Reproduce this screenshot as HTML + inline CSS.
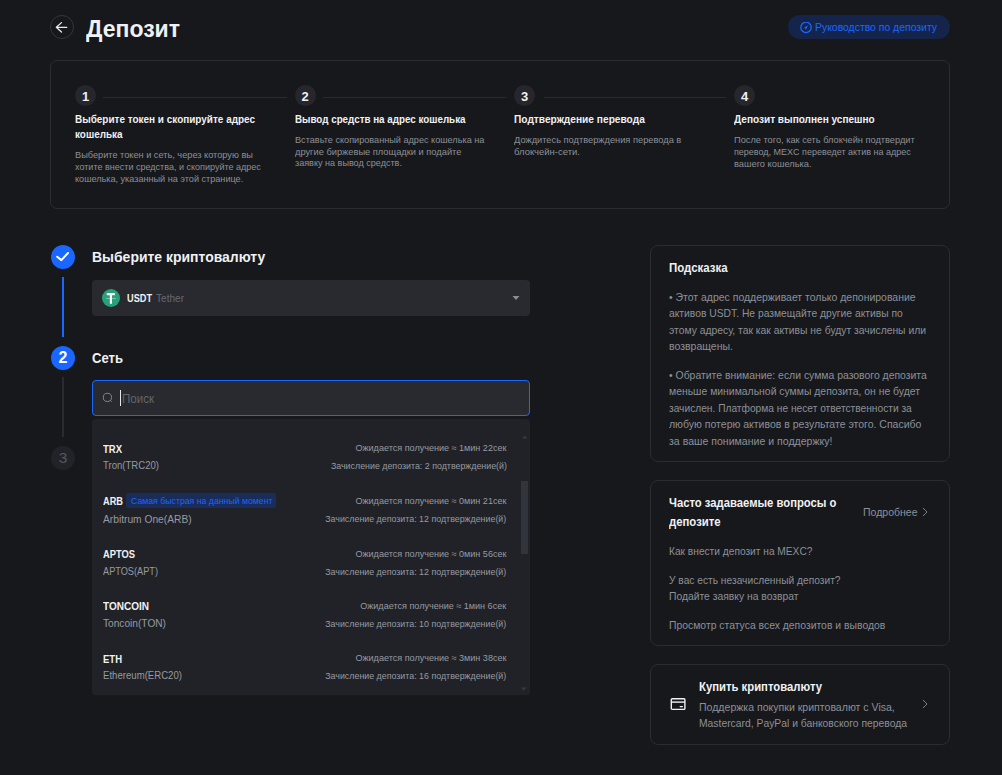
<!DOCTYPE html>
<html><head><meta charset="utf-8"><title>Депозит</title>
<style>
html,body{margin:0;padding:0;}
body{width:1002px;height:775px;background:#17181c;position:relative;overflow:hidden;font-family:"Liberation Sans",sans-serif;}
.t{position:absolute;white-space:nowrap;line-height:1;}
.c{position:absolute;border-radius:50%;text-align:center;}
</style></head><body>
<div style="position:absolute;left:50px;top:15px;width:24px;height:24px;box-sizing:border-box;border:1px solid #34363c;border-radius:50%;"></div>
<svg style="position:absolute;left:50px;top:15px" width="24" height="24" viewBox="0 0 24 24"><path d="M16.8 12.3H6.3M11.5 7.6L6.3 12.3L11.5 17" fill="none" stroke="#ececee" stroke-width="1.25" stroke-linecap="round" stroke-linejoin="round"/></svg>
<div class="t" style="left:86.00px;top:17.00px;font-size:24px;font-weight:700;color:#f0f1f3;transform:scaleX(0.9590);transform-origin:left center;">Депозит</div>
<div style="position:absolute;left:788px;top:15px;width:162px;height:24px;box-sizing:border-box;background:#15244a;border-radius:12px;"></div>
<svg style="position:absolute;left:800px;top:21.5px" width="12" height="12" viewBox="0 0 12 12"><circle cx="6" cy="5.4" r="5.2" fill="none" stroke="#1a67ff" stroke-width="1.3"/><path d="M3.6 5.9L8.1 3.3L5.9 7.9L5.3 6.3Z" fill="#1a67ff"/></svg>
<div class="t" style="left:815.40px;top:22.00px;font-size:11.5px;font-weight:400;color:#1a67ff;transform:scaleX(0.9060);transform-origin:left center;">Руководство по депозиту</div>
<div style="position:absolute;left:50px;top:60px;width:900px;height:149px;box-sizing:border-box;border:1px solid #2b2c31;border-radius:7px;"></div>
<div class="c" style="left:75px;top:85px;width:21px;height:21px;background:#26272c;"></div>
<div class="t" style="left:35.50px;width:100px;text-align:center;top:90.00px;font-size:13px;font-weight:700;color:#f0f1f3;">1</div>
<div class="c" style="left:294.5px;top:85px;width:21px;height:21px;background:#26272c;"></div>
<div class="t" style="left:255.00px;width:100px;text-align:center;top:90.00px;font-size:13px;font-weight:700;color:#f0f1f3;">2</div>
<div class="c" style="left:514px;top:85px;width:21px;height:21px;background:#26272c;"></div>
<div class="t" style="left:474.50px;width:100px;text-align:center;top:90.00px;font-size:13px;font-weight:700;color:#f0f1f3;">3</div>
<div class="c" style="left:734px;top:85px;width:21px;height:21px;background:#26272c;"></div>
<div class="t" style="left:694.50px;width:100px;text-align:center;top:90.00px;font-size:13px;font-weight:700;color:#f0f1f3;">4</div>
<div style="position:absolute;left:103px;top:97px;width:184px;height:1px;box-sizing:border-box;background:#2a2b30;"></div>
<div style="position:absolute;left:323px;top:97px;width:183px;height:1px;box-sizing:border-box;background:#2a2b30;"></div>
<div style="position:absolute;left:543.6px;top:97px;width:182.39999999999998px;height:1px;box-sizing:border-box;background:#2a2b30;"></div>
<div class="t" style="left:75.00px;top:114.00px;font-size:10.5px;font-weight:700;color:#f0f1f3;transform:scaleX(0.9480);transform-origin:left center;">Выберите токен и скопируйте адрес</div>
<div class="t" style="left:75.00px;top:129.00px;font-size:10.5px;font-weight:700;color:#f0f1f3;transform:scaleX(0.9455);transform-origin:left center;">кошелька</div>
<div class="t" style="left:75.00px;top:150.00px;font-size:9.6px;font-weight:400;color:#8c9097;transform:scaleX(0.9586);transform-origin:left center;">Выберите токен и сеть, через которую вы</div>
<div class="t" style="left:75.00px;top:162.00px;font-size:9.6px;font-weight:400;color:#8c9097;transform:scaleX(0.9407);transform-origin:left center;">хотите внести средства, и скопируйте адрес</div>
<div class="t" style="left:75.00px;top:174.00px;font-size:9.6px;font-weight:400;color:#8c9097;transform:scaleX(0.9489);transform-origin:left center;">кошелька, указанный на этой странице.</div>
<div class="t" style="left:294.50px;top:114.00px;font-size:10.5px;font-weight:700;color:#f0f1f3;transform:scaleX(0.9342);transform-origin:left center;">Вывод средств на адрес кошелька</div>
<div class="t" style="left:294.50px;top:135.00px;font-size:9.6px;font-weight:400;color:#8c9097;transform:scaleX(0.9516);transform-origin:left center;">Вставьте скопированный адрес кошелька на</div>
<div class="t" style="left:294.50px;top:147.00px;font-size:9.6px;font-weight:400;color:#8c9097;transform:scaleX(0.9676);transform-origin:left center;">другие биржевые площадки и подайте</div>
<div class="t" style="left:294.50px;top:158.00px;font-size:9.6px;font-weight:400;color:#8c9097;transform:scaleX(0.9440);transform-origin:left center;">заявку на вывод средств.</div>
<div class="t" style="left:514.00px;top:114.00px;font-size:10.5px;font-weight:700;color:#f0f1f3;transform:scaleX(0.9682);transform-origin:left center;">Подтверждение перевода</div>
<div class="t" style="left:514.00px;top:135.00px;font-size:9.6px;font-weight:400;color:#8c9097;transform:scaleX(0.9662);transform-origin:left center;">Дождитесь подтверждения перевода в</div>
<div class="t" style="left:514.00px;top:147.00px;font-size:9.6px;font-weight:400;color:#8c9097;transform:scaleX(0.9886);transform-origin:left center;">блокчейн-сети.</div>
<div class="t" style="left:734.00px;top:114.00px;font-size:10.5px;font-weight:700;color:#f0f1f3;transform:scaleX(0.9576);transform-origin:left center;">Депозит выполнен успешно</div>
<div class="t" style="left:734.00px;top:135.00px;font-size:9.6px;font-weight:400;color:#8c9097;transform:scaleX(0.9624);transform-origin:left center;">После того, как сеть блокчейн подтвердит</div>
<div class="t" style="left:734.00px;top:147.00px;font-size:9.6px;font-weight:400;color:#8c9097;transform:scaleX(0.9374);transform-origin:left center;">перевод, MEXC переведет актив на адрес</div>
<div class="t" style="left:734.00px;top:159.00px;font-size:9.6px;font-weight:400;color:#8c9097;transform:scaleX(0.9693);transform-origin:left center;">вашего кошелька.</div>
<div class="c" style="left:51px;top:245px;width:24px;height:24px;background:#1a67ff;"></div>
<svg style="position:absolute;left:51px;top:245px" width="24" height="24" viewBox="0 0 24 24"><path d="M6.2 11.7L10.4 15.1L17 8" fill="none" stroke="#fff" stroke-width="2" stroke-linecap="round" stroke-linejoin="round"/></svg>
<div style="position:absolute;left:62px;top:277px;width:2px;height:60px;box-sizing:border-box;background:#1a67ff;"></div>
<div class="c" style="left:51px;top:346px;width:24px;height:24px;background:#1a67ff;"></div>
<div class="t" style="left:13.00px;width:100px;text-align:center;top:350.00px;font-size:16px;font-weight:700;color:#ffffff;">2</div>
<div style="position:absolute;left:62px;top:377px;width:2px;height:60px;box-sizing:border-box;background:#2a2b30;"></div>
<div class="c" style="left:51px;top:446px;width:24px;height:24px;background:#222328;"></div>
<div class="t" style="left:13.00px;width:100px;text-align:center;top:450.00px;font-size:15.5px;font-weight:400;color:#55575d;">3</div>
<div class="t" style="left:92.40px;top:250.00px;font-size:14.5px;font-weight:700;color:#f0f1f3;transform:scaleX(0.9625);transform-origin:left center;">Выберите криптовалюту</div>
<div style="position:absolute;left:92px;top:280px;width:438px;height:36px;box-sizing:border-box;background:#292a30;border-radius:4px;"></div>
<svg style="position:absolute;left:102px;top:289px" width="18" height="18" viewBox="0 0 18 18"><circle cx="9" cy="9" r="9" fill="#26a17b"/><path d="M4.8 5.1H12.8M8.9 5.1V14.8" stroke="#fff" stroke-width="2.1"/><path d="M4.2 9.4H13.8" stroke="#fff" stroke-width="0.8" opacity="0.55"/></svg>
<div class="t" style="left:126.50px;top:293.00px;font-size:11px;font-weight:700;color:#f0f1f3;transform:scaleX(0.8349);transform-origin:left center;">USDT</div>
<div class="t" style="left:155.90px;top:293.00px;font-size:11px;font-weight:400;color:#666970;transform:scaleX(0.9159);transform-origin:left center;">Tether</div>
<svg style="position:absolute;left:511px;top:295px" width="10" height="6" viewBox="0 0 10 6"><path d="M1.5 1H8.5L5 5Z" fill="#8b8d93"/></svg>
<div class="t" style="left:91.80px;top:350.00px;font-size:15px;font-weight:700;color:#f0f1f3;transform:scaleX(0.8721);transform-origin:left center;">Сеть</div>
<div style="position:absolute;left:92px;top:380px;width:438px;height:36px;box-sizing:border-box;background:#292a30;border:1px solid #1a67ff;border-radius:4px;"></div>
<svg style="position:absolute;left:101px;top:392px" width="14" height="14" viewBox="0 0 14 14"><circle cx="6.4" cy="5.4" r="4.1" fill="none" stroke="#868991" stroke-width="1"/><path d="M9.4 8.4L10.4 9.4" stroke="#868991" stroke-width="1" stroke-linecap="round"/></svg>
<div style="position:absolute;left:120px;top:390px;width:1px;height:16px;box-sizing:border-box;background:#e8e8ea;"></div>
<div class="t" style="left:121.50px;top:393.00px;font-size:12.5px;font-weight:400;color:#62656c;transform:scaleX(0.9239);transform-origin:left center;">Поиск</div>
<div style="position:absolute;left:92px;top:419px;width:438px;height:276px;box-sizing:border-box;background:#212227;border-radius:4px 4px 3px 3px;"></div>
<div class="t" style="left:103.30px;top:444.00px;font-size:11px;font-weight:700;color:#f0f1f3;transform:scaleX(0.8636);transform-origin:left center;">TRX</div>
<div class="t" style="left:103.30px;top:460.00px;font-size:11px;font-weight:400;color:#969aa1;transform:scaleX(0.8699);transform-origin:left center;">Tron(TRC20)</div>
<div class="t" style="right:495.40px;top:443.00px;font-size:9.5px;font-weight:400;color:#969aa1;transform:scaleX(0.9529);transform-origin:right center;">Ожидается получение ≈ 1мин 22сек</div>
<div class="t" style="right:495.40px;top:461.00px;font-size:9.5px;font-weight:400;color:#969aa1;transform:scaleX(0.9315);transform-origin:right center;">Зачисление депозита: 2 подтверждение(й)</div>
<div class="t" style="left:103.30px;top:496.00px;font-size:11px;font-weight:700;color:#f0f1f3;transform:scaleX(0.8392);transform-origin:left center;">ARB</div>
<div class="t" style="left:103.30px;top:514.00px;font-size:11px;font-weight:400;color:#969aa1;transform:scaleX(0.9292);transform-origin:left center;">Arbitrum One(ARB)</div>
<div class="t" style="right:495.40px;top:496.00px;font-size:9.5px;font-weight:400;color:#969aa1;transform:scaleX(0.9529);transform-origin:right center;">Ожидается получение ≈ 0мин 21сек</div>
<div class="t" style="right:495.40px;top:514.00px;font-size:9.5px;font-weight:400;color:#969aa1;transform:scaleX(0.9319);transform-origin:right center;">Зачисление депозита: 12 подтверждение(й)</div>
<div class="t" style="left:103.30px;top:549.00px;font-size:11px;font-weight:700;color:#f0f1f3;transform:scaleX(0.8489);transform-origin:left center;">APTOS</div>
<div class="t" style="left:103.30px;top:566.00px;font-size:11px;font-weight:400;color:#969aa1;transform:scaleX(0.8358);transform-origin:left center;">APTOS(APT)</div>
<div class="t" style="right:495.40px;top:549.00px;font-size:9.5px;font-weight:400;color:#969aa1;transform:scaleX(0.9529);transform-origin:right center;">Ожидается получение ≈ 0мин 56сек</div>
<div class="t" style="right:495.40px;top:567.00px;font-size:9.5px;font-weight:400;color:#969aa1;transform:scaleX(0.9319);transform-origin:right center;">Зачисление депозита: 12 подтверждение(й)</div>
<div class="t" style="left:103.30px;top:601.00px;font-size:11px;font-weight:700;color:#f0f1f3;transform:scaleX(0.9105);transform-origin:left center;">TONCOIN</div>
<div class="t" style="left:103.30px;top:618.00px;font-size:11px;font-weight:400;color:#969aa1;transform:scaleX(0.9229);transform-origin:left center;">Toncoin(TON)</div>
<div class="t" style="right:495.40px;top:601.00px;font-size:9.5px;font-weight:400;color:#969aa1;transform:scaleX(0.9531);transform-origin:right center;">Ожидается получение ≈ 1мин 6сек</div>
<div class="t" style="right:495.40px;top:619.00px;font-size:9.5px;font-weight:400;color:#969aa1;transform:scaleX(0.9319);transform-origin:right center;">Зачисление депозита: 10 подтверждение(й)</div>
<div class="t" style="left:103.30px;top:654.00px;font-size:11px;font-weight:700;color:#f0f1f3;transform:scaleX(0.8636);transform-origin:left center;">ETH</div>
<div class="t" style="left:103.30px;top:670.00px;font-size:11px;font-weight:400;color:#969aa1;transform:scaleX(0.8732);transform-origin:left center;">Ethereum(ERC20)</div>
<div class="t" style="right:495.40px;top:653.00px;font-size:9.5px;font-weight:400;color:#969aa1;transform:scaleX(0.9529);transform-origin:right center;">Ожидается получение ≈ 3мин 38сек</div>
<div class="t" style="right:495.40px;top:671.00px;font-size:9.5px;font-weight:400;color:#969aa1;transform:scaleX(0.9319);transform-origin:right center;">Зачисление депозита: 16 подтверждение(й)</div>
<div style="position:absolute;left:126px;top:493px;width:150px;height:15px;box-sizing:border-box;background:#192c5a;border-radius:2px;"></div>
<div class="t" style="left:130.50px;top:496.00px;font-size:9.5px;font-weight:400;color:#1a67ff;transform:scaleX(0.9185);transform-origin:left center;">Самая быстрая на данный момент</div>
<div style="position:absolute;left:521px;top:481px;width:7px;height:73px;box-sizing:border-box;background:#32343b;"></div>
<svg style="position:absolute;left:521px;top:434px" width="8" height="6" viewBox="0 0 8 6"><path d="M1.2 4.6H6.4L3.8 1.6Z" fill="#393b42"/></svg>
<svg style="position:absolute;left:520px;top:686px" width="8" height="6" viewBox="0 0 8 6"><path d="M1.2 1.4H6.4L3.8 4.4Z" fill="#393b42"/></svg>
<div style="position:absolute;left:650px;top:245px;width:300px;height:217px;box-sizing:border-box;border:1px solid #2b2c31;border-radius:8px;"></div>
<div class="t" style="left:668.70px;top:262.00px;font-size:12px;font-weight:700;color:#f0f1f3;transform:scaleX(0.9528);transform-origin:left center;">Подсказка</div>
<div class="t" style="left:668.70px;top:292.00px;font-size:11px;font-weight:400;color:#8c9097;transform:scaleX(0.9506);transform-origin:left center;">• Этот адрес поддерживает только депонирование</div>
<div class="t" style="left:668.70px;top:308.00px;font-size:11px;font-weight:400;color:#8c9097;transform:scaleX(0.9370);transform-origin:left center;">активов USDT. Не размещайте другие активы по</div>
<div class="t" style="left:668.70px;top:325.00px;font-size:11px;font-weight:400;color:#8c9097;transform:scaleX(0.9399);transform-origin:left center;">этому адресу, так как активы не будут зачислены или</div>
<div class="t" style="left:668.70px;top:341.00px;font-size:11px;font-weight:400;color:#8c9097;transform:scaleX(0.9564);transform-origin:left center;">возвращены.</div>
<div class="t" style="left:668.70px;top:370.00px;font-size:11px;font-weight:400;color:#8c9097;transform:scaleX(0.9468);transform-origin:left center;">• Обратите внимание: если сумма разового депозита</div>
<div class="t" style="left:668.70px;top:386.00px;font-size:11px;font-weight:400;color:#8c9097;transform:scaleX(0.9460);transform-origin:left center;">меньше минимальной суммы депозита, он не будет</div>
<div class="t" style="left:668.70px;top:403.00px;font-size:11px;font-weight:400;color:#8c9097;transform:scaleX(0.9270);transform-origin:left center;">зачислен. Платформа не несет ответственности за</div>
<div class="t" style="left:668.70px;top:419.00px;font-size:11px;font-weight:400;color:#8c9097;transform:scaleX(0.9542);transform-origin:left center;">любую потерю активов в результате этого. Спасибо</div>
<div class="t" style="left:668.70px;top:436.00px;font-size:11px;font-weight:400;color:#8c9097;transform:scaleX(0.9596);transform-origin:left center;">за ваше понимание и поддержку!</div>
<div style="position:absolute;left:650px;top:480px;width:300px;height:166px;box-sizing:border-box;border:1px solid #2b2c31;border-radius:8px;"></div>
<div class="t" style="left:668.50px;top:497.00px;font-size:12px;font-weight:700;color:#f0f1f3;transform:scaleX(0.9391);transform-origin:left center;">Часто задаваемые вопросы о</div>
<div class="t" style="left:668.50px;top:516.00px;font-size:12px;font-weight:700;color:#f0f1f3;transform:scaleX(0.9450);transform-origin:left center;">депозите</div>
<div class="t" style="left:862.65px;top:507.00px;font-size:11px;font-weight:400;color:#8c9097;transform:scaleX(0.9554);transform-origin:left center;">Подробнее</div>
<svg style="position:absolute;left:920px;top:506px" width="10" height="12" viewBox="0 0 10 12"><path d="M3 2L7 6L3 10" fill="none" stroke="#7d8087" stroke-width="1"/></svg>
<div class="t" style="left:668.50px;top:546.00px;font-size:11px;font-weight:400;color:#8c9097;transform:scaleX(0.9247);transform-origin:left center;">Как внести депозит на MEXC?</div>
<div class="t" style="left:668.50px;top:575.00px;font-size:11px;font-weight:400;color:#8c9097;transform:scaleX(0.9283);transform-origin:left center;">У вас есть незачисленный депозит?</div>
<div class="t" style="left:668.50px;top:591.00px;font-size:11px;font-weight:400;color:#8c9097;transform:scaleX(0.9392);transform-origin:left center;">Подайте заявку на возврат</div>
<div class="t" style="left:668.50px;top:620.00px;font-size:11px;font-weight:400;color:#8c9097;transform:scaleX(0.9446);transform-origin:left center;">Просмотр статуса всех депозитов и выводов</div>
<div style="position:absolute;left:650px;top:664px;width:300px;height:81px;box-sizing:border-box;border:1px solid #2b2c31;border-radius:8px;"></div>
<svg style="position:absolute;left:669px;top:696px" width="18" height="16" viewBox="0 0 18 16"><rect x="2.3" y="2.7" width="13.6" height="10.7" rx="1" fill="none" stroke="#f0f0f2" stroke-width="1.4"/><path d="M2.3 6.1H15.9" stroke="#f0f0f2" stroke-width="1.4"/><path d="M11.2 10.6H13.4" stroke="#f0f0f2" stroke-width="1.3" stroke-linecap="round"/></svg>
<div class="t" style="left:698.50px;top:681.00px;font-size:12px;font-weight:700;color:#f0f1f3;transform:scaleX(0.9423);transform-origin:left center;">Купить криптовалюту</div>
<div class="t" style="left:698.50px;top:702.00px;font-size:11px;font-weight:400;color:#8c9097;transform:scaleX(0.9591);transform-origin:left center;">Поддержка покупки криптовалют с Visa,</div>
<div class="t" style="left:698.50px;top:718.00px;font-size:11px;font-weight:400;color:#8c9097;transform:scaleX(0.9404);transform-origin:left center;">Mastercard, PayPal и банковского перевода</div>
<svg style="position:absolute;left:920px;top:698px" width="10" height="12" viewBox="0 0 10 12"><path d="M3 2L7 6L3 10" fill="none" stroke="#7d8087" stroke-width="1"/></svg>
</body></html>
